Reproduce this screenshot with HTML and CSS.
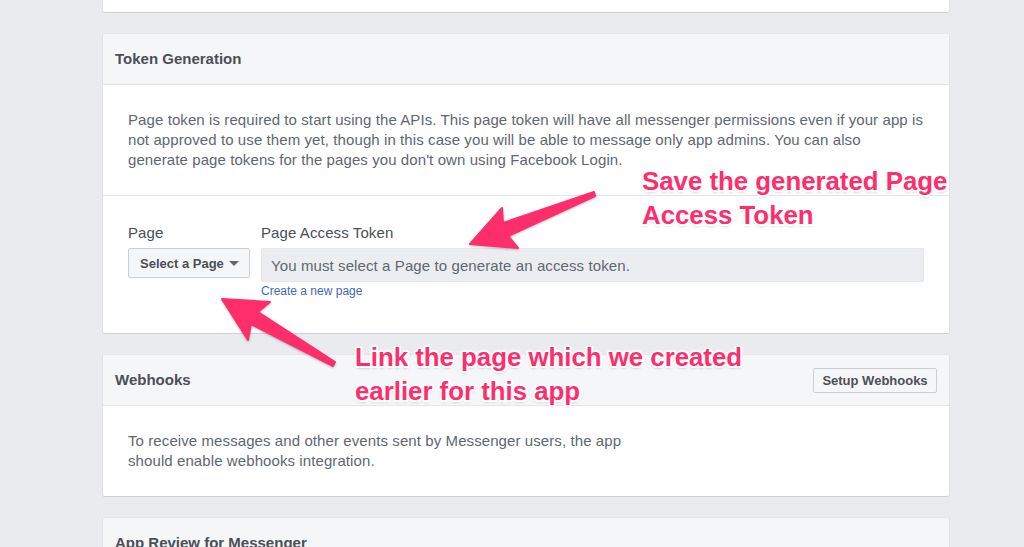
FILE: index.html
```html
<!DOCTYPE html>
<html>
<head>
<meta charset="utf-8">
<link rel="stylesheet" href="styles.css">
</head>
<body>
<div class="page">
  <div class="card stub"></div>

  <div class="card">
    <div class="card-header"><h2>Token Generation</h2></div>
    <div class="card-section">
      <p class="text intro">Page token is required to start using the APIs. This page token will have all messenger permissions even if your app is<br>not approved to use them yet, though in this case you will be able to message only app admins. You can also<br>generate page tokens for the pages you don't own using Facebook Login.</p>
    </div>
    <div class="card-section form-row">
      <div class="field">
        <label class="label">Page</label>
        <button class="select-btn">Select a Page <span class="caret"></span></button>
      </div>
      <div class="field grow">
        <label class="label">Page Access Token</label>
        <div class="token-input">You must select a Page to generate an access token.</div>
        <a class="link" href="#">Create a new page</a>
      </div>
    </div>
  </div>

  <div class="card">
    <div class="card-header">
      <h2>Webhooks</h2>
      <button class="btn">Setup Webhooks</button>
    </div>
    <div class="card-section">
      <p class="text narrow">To receive messages and other events sent by Messenger users, the app should enable webhooks integration.</p>
    </div>
  </div>

  <div class="card">
    <div class="card-header"><h2>App Review for Messenger</h2></div>
  </div>
</div>

<div class="overlay">
  <svg class="arrows" width="1024" height="547" viewBox="0 0 1024 547">
    <polygon points="470,244 502,208 503,223 594,192 595,196 508,236 518,248" />
    <polygon points="222,299 270,302 258,312 335,362 333,366 251,324 248,340" />
  </svg>
  <div class="note note-save">Save the generated Page<br>Access Token</div>
  <div class="note note-link">Link the page which we created<br>earlier for this app</div>
</div>
</body>
</html>
```

FILE: styles.css
```css
html, body {
  margin: 0;
  padding: 0;
}
body {
  background: #e9ebee;
  font-family: "Liberation Sans", Helvetica, Arial, sans-serif;
  font-size: 15px;
  color: #4b4f56;
  width: 1024px;
  height: 547px;
  overflow: hidden;
  position: relative;
}
.page {
  width: 848px;
  margin-left: 102px;
  display: flex;
  flex-direction: column;
  gap: 20px;
}
.card {
  background: #fff;
  border: 1px solid;
  border-color: #e5e6e9 #dfe0e4 #d0d1d5;
  border-radius: 3px;
}
.stub {
  height: 12px;
  border-top: none;
  border-radius: 0 0 3px 3px;
}
.card-header {
  height: 50px;
  padding: 0 12px;
  background: #f5f6f7;
  border-bottom: 1px solid #e5e5e5;
  border-radius: 3px 3px 0 0;
  display: flex;
  align-items: center;
  justify-content: space-between;
}
.card-header h2 {
  margin: 0 0 1px;
  font-size: 15px;
  font-weight: bold;
  color: #4b4f56;
}
.card-section {
  padding: 25px 25px 25px 25px;
}
.card-section + .card-section {
  border-top: 1px solid #e5e5e5;
}
.text {
  margin: 0;
  font-size: 15px;
  letter-spacing: 0.09px;
  line-height: 20px;
  color: #606770;
}
.intro {
  white-space: nowrap;
}
.narrow {
  width: 500px;
}
.form-row {
  display: flex;
  gap: 11px;
  padding-top: 28px;
  padding-bottom: 35px;
}
.field {
  display: flex;
  flex-direction: column;
  align-items: flex-start;
}
.grow {
  flex: 1;
  align-items: stretch;
}
.label {
  display: block;
  font-size: 15px;
  letter-spacing: 0.1px;
  line-height: 18px;
  margin-bottom: 6px;
  color: #4b4f56;
}
.select-btn {
  height: 30px;
  width: 122px;
  background: #f5f6f7;
  border: 1px solid #ccd0d5;
  border-radius: 2px;
  font-family: inherit;
  font-size: 13px;
  font-weight: bold;
  color: #4b4f56;
  padding: 0 8px 0 11px;
  white-space: nowrap;
  display: flex;
  align-items: center;
  gap: 5px;
}
.caret {
  display: inline-block;
  flex: none;
  width: 0;
  height: 0;
  border-left: 5px solid transparent;
  border-right: 5px solid transparent;
  border-top: 5px solid #606770;
}
.token-input {
  height: 34px;
  box-sizing: border-box;
  background: #ebedf0;
  border: 1px solid #e4e6ea;
  border-radius: 2px;
  padding: 0 9px;
  display: flex;
  align-items: center;
  color: #606770;
  font-size: 15px;
  letter-spacing: 0.1px;
}
.link {
  margin-top: 2px;
  font-size: 12px;
  line-height: 14px;
  color: #4267b2;
  text-decoration: none;
  align-self: flex-start;
}
.btn {
  height: 25px;
  width: 124px;
  background: #f5f6f7;
  border: 1px solid #ccd0d5;
  border-radius: 2px;
  font-family: inherit;
  font-size: 13px;
  font-weight: bold;
  color: #4b4f56;
  padding: 0 6px;
  white-space: nowrap;
}
.overlay {
  position: absolute;
  left: 0;
  top: 0;
  width: 1024px;
  height: 547px;
  pointer-events: none;
}
.arrows {
  position: absolute;
  left: 0;
  top: 0;
}
.arrows polygon {
  fill: #fe2e6d;
  stroke: #fe2e6d;
  stroke-width: 2;
  stroke-linejoin: round;
  filter: drop-shadow(0 1px 1px rgba(0,0,0,0.25));
}
.note {
  position: absolute;
  font-family: "Liberation Sans", Arial, sans-serif;
  font-weight: bold;
  font-size: 25.8px;
  line-height: 34px;
  color: #fe2e6d;
  white-space: nowrap;
  text-shadow:
    -2px 0 0 #fff, 2px 0 0 #fff, 0 -2px 0 #fff, 0 2px 0 #fff,
    -1.5px -1.5px 0 #fff, 1.5px -1.5px 0 #fff, -1.5px 1.5px 0 #fff, 1.5px 1.5px 0 #fff,
    0 2px 3px rgba(0,0,0,0.3);
}
.note-save {
  left: 642px;
  top: 164px;
}
.note-link {
  left: 355px;
  top: 340px;
}
```
